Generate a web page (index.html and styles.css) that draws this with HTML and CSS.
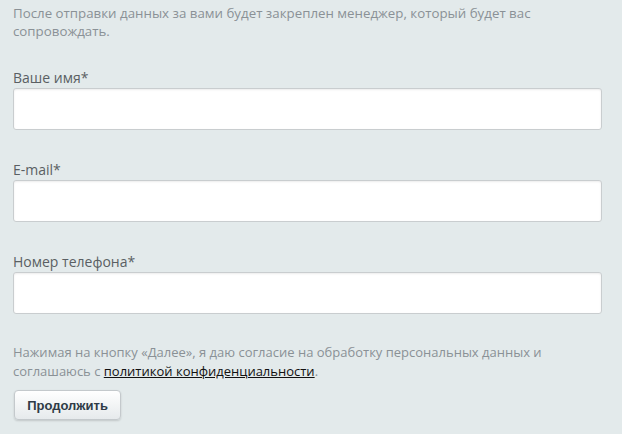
FILE: index.html
```html
<!DOCTYPE html>
<html lang="ru">
<head>
<meta charset="utf-8">
<link rel="stylesheet" href="styles.css">
</head>
<body>
<form class="form">
  <p class="intro">После отправки данных за вами будет закреплен менеджер, который будет вас сопровождать.</p>
  <div class="field">
    <label class="label">Ваше имя*</label>
    <input class="input" type="text">
  </div>
  <div class="field">
    <label class="label">E-mail*</label>
    <input class="input" type="text">
  </div>
  <div class="field">
    <label class="label">Номер телефона*</label>
    <input class="input" type="text">
  </div>
  <p class="consent">Нажимая на кнопку «Далее», я даю согласие на обработку персональных данных и соглашаюсь с <a class="link" href="#">политикой конфиденциальности</a>.</p>
  <button class="btn" type="button">Продолжить</button>
</form>
</body>
</html>
```
FILE: styles.css
```css
html, body {
  margin: 0;
  padding: 0;
  background: #e3eaeb;
  width: 622px;
  height: 434px;
  overflow: hidden;
}
.form {
  display: flex;
  flex-direction: column;
  padding: 4px 21px 0 13px;
  font-family: "Open Sans", sans-serif;
}
.intro {
  margin: 0;
  font-size: 13.3px;
  line-height: 18px;
  color: #8a9196;
  padding-right: 40px;
}
.field {
  display: flex;
  flex-direction: column;
}
.field:first-of-type { margin-top: 28px; }
.field + .field { margin-top: 30px; }
.label {
  font-size: 14px;
  line-height: 20px;
  color: #5a5f63;
  margin-bottom: 0;
}
.input {
  box-sizing: border-box;
  height: 42px;
  width: 589px;
  margin: 0;
  border: 1px solid #c9cdcf;
  border-radius: 3px;
  background: #fff;
  box-shadow: inset 0 1px 2px rgba(0,0,0,0.08);
}
.consent {
  margin: 29px 0 0;
  font-size: 13px;
  line-height: 19px;
  color: #8a9196;
}
.link {
  color: #111;
  text-decoration: underline;
}
.btn {
  align-self: flex-start;
  margin-top: 9px;
  margin-left: 1px;
  width: 107px;
  height: 30px;
  border: 1px solid #c4c9cc;
  border-radius: 4px;
  background: linear-gradient(#ffffff, #e6eaec);
  box-shadow: 0 1px 2px rgba(0,0,0,0.15);
  font-family: "Liberation Sans", Arial, sans-serif;
  font-weight: bold;
  font-size: 13px;
  color: #2f3b47;
  padding: 0;
}
```
